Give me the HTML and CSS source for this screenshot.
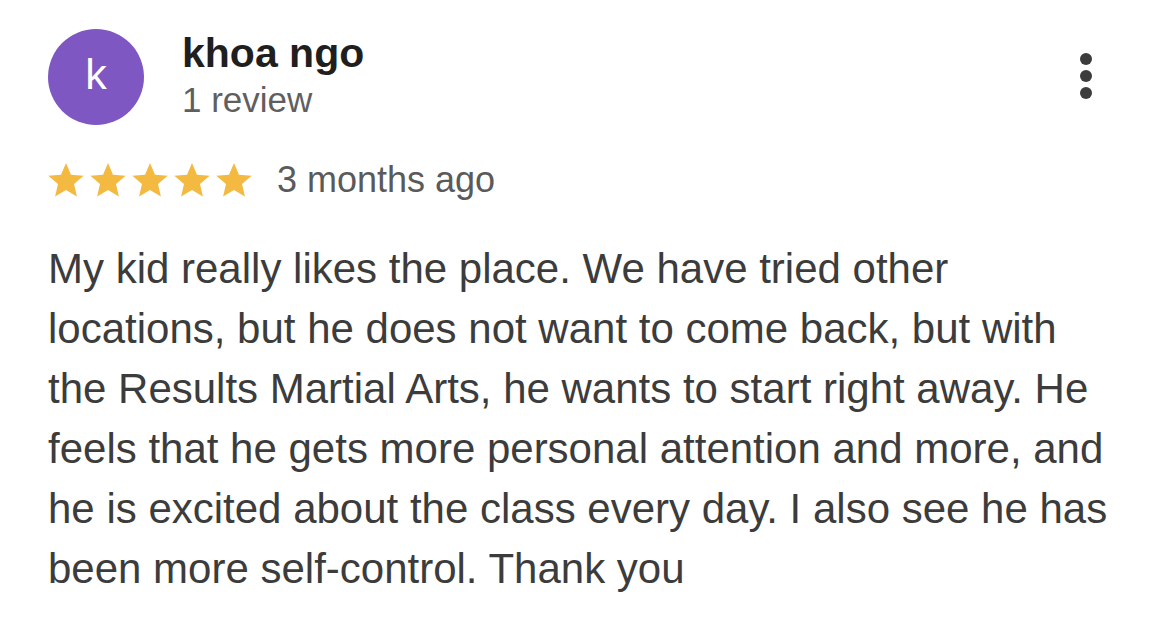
FILE: index.html
```html
<!DOCTYPE html>
<html lang="en">
<head>
<meta charset="utf-8">
<title>Review</title>
<link rel="stylesheet" href="styles.css">
</head>
<body>
<div class="review">
  <div class="header">
    <div class="avatar">k</div>
    <div class="author">
      <div class="name">khoa ngo</div>
      <div class="count">1 review</div>
    </div>
    <div class="menu" aria-label="More options">
      <span class="dot"></span>
      <span class="dot"></span>
      <span class="dot"></span>
    </div>
  </div>
  <div class="rating">
    <div class="stars">
      <svg class="star" viewBox="2 2 20 19.27" width="36" height="34"><path d="M12 17.27L18.18 21l-1.64-7.03L22 9.24l-7.19-.61L12 2 9.19 8.63 2 9.24l5.46 4.73L5.82 21z"/></svg>
      <svg class="star" viewBox="2 2 20 19.27" width="36" height="34"><path d="M12 17.27L18.18 21l-1.64-7.03L22 9.24l-7.19-.61L12 2 9.19 8.63 2 9.24l5.46 4.73L5.82 21z"/></svg>
      <svg class="star" viewBox="2 2 20 19.27" width="36" height="34"><path d="M12 17.27L18.18 21l-1.64-7.03L22 9.24l-7.19-.61L12 2 9.19 8.63 2 9.24l5.46 4.73L5.82 21z"/></svg>
      <svg class="star" viewBox="2 2 20 19.27" width="36" height="34"><path d="M12 17.27L18.18 21l-1.64-7.03L22 9.24l-7.19-.61L12 2 9.19 8.63 2 9.24l5.46 4.73L5.82 21z"/></svg>
      <svg class="star" viewBox="2 2 20 19.27" width="36" height="34"><path d="M12 17.27L18.18 21l-1.64-7.03L22 9.24l-7.19-.61L12 2 9.19 8.63 2 9.24l5.46 4.73L5.82 21z"/></svg>
    </div>
    <span class="date">3 months ago</span>
  </div>
  <p class="text">My kid really likes the place. We have tried other locations, but he does not want to come back, but with the Results Martial Arts, he wants to start right away. He feels that he gets more personal attention and more, and he is excited about the class every day. I also see he has been more self-control. Thank you</p>
</div>
</body>
</html>
```

FILE: styles.css
```css
html, body {
  margin: 0;
  padding: 0;
  background: #ffffff;
}

body {
  font-family: "Liberation Sans", Arial, Helvetica, sans-serif;
  width: 1170px;
  height: 624px;
  overflow: hidden;
}

.review {
  padding: 29px 48px 0 48px;
}

.header {
  display: flex;
  align-items: flex-start;
}

.avatar {
  width: 96px;
  height: 96px;
  border-radius: 50%;
  background: #7e57c2;
  color: #ffffff;
  font-size: 43px;
  line-height: 43px;
  display: flex;
  align-items: center;
  justify-content: center;
  padding-bottom: 6px;
  box-sizing: border-box;
  flex-shrink: 0;
}

.author {
  margin-left: 38px;
  padding-top: 1px;
}

.name {
  font-size: 41px;
  line-height: 46px;
  font-weight: bold;
  color: #1f1f1f;
}

.count {
  margin-top: 4px;
  font-size: 35px;
  line-height: 40px;
  color: #5f5f5f;
}

.menu {
  margin-left: auto;
  margin-right: 30px;
  margin-top: 24px;
  display: flex;
  flex-direction: column;
  gap: 5px;
}

.dot {
  display: block;
  width: 12px;
  height: 12px;
  border-radius: 50%;
  background: #3c3c3c;
}

.rating {
  margin-top: 35px;
  display: flex;
  align-items: center;
  height: 40px;
}

.stars {
  display: flex;
  gap: 6px;
}

.star {
  display: block;
  fill: #f4b940;
}

.date {
  margin-left: 25px;
  font-size: 36px;
  line-height: 40px;
  color: #5a5a5a;
}

.text {
  margin: 39px 0 0 0;
  font-size: 42px;
  line-height: 60px;
  color: #3c3c3c;
}
```
